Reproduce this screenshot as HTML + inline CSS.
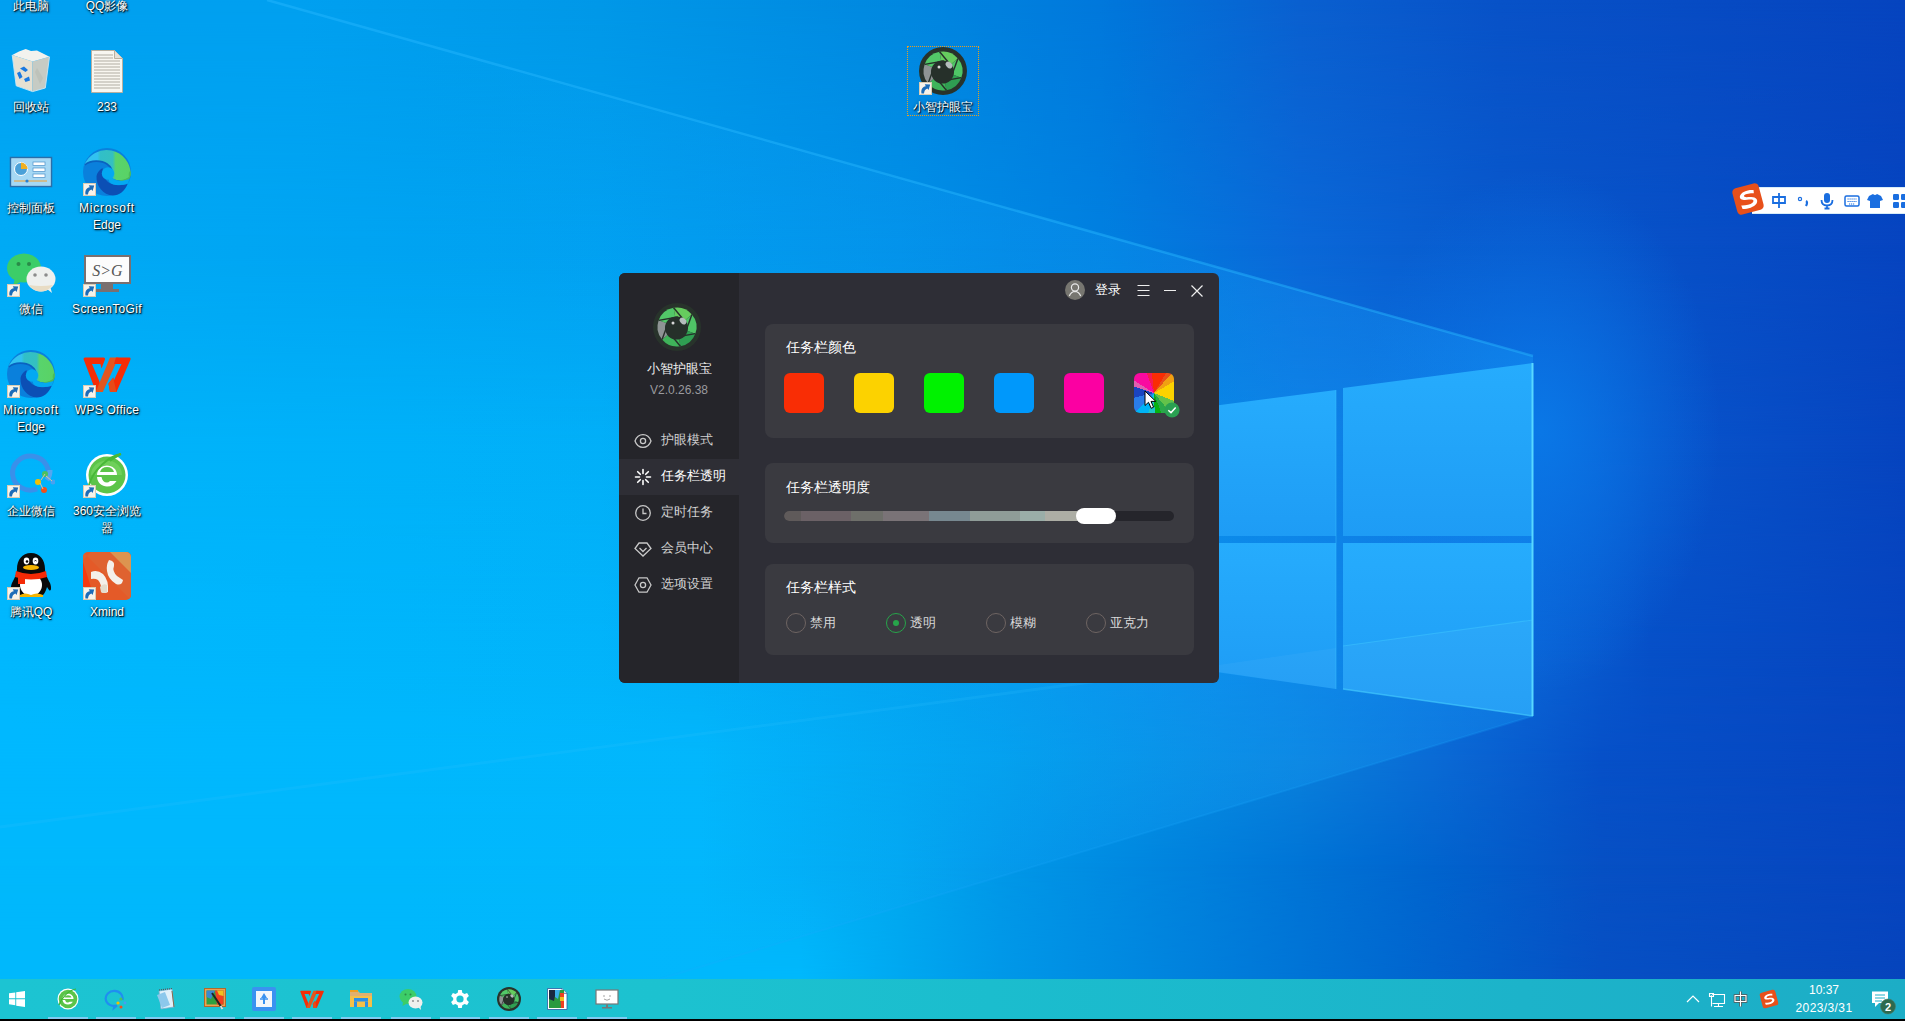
<!DOCTYPE html>
<html><head><meta charset="utf-8">
<style>
*{margin:0;padding:0;box-sizing:border-box}
html,body{width:1905px;height:1021px;overflow:hidden;background:#0a3fc0}
body{position:relative;font-family:"Liberation Sans",sans-serif}
#bg{position:absolute;left:0;top:0}
.abs{position:absolute}
.nav{left:42px;font-size:13px;line-height:18px;color:#d2d2d2;white-space:nowrap}
.card{left:146px;width:429px;border-radius:8px;background:#3a3a40}
.ctitle{left:167px;font-size:14px;line-height:18px;color:#fff;white-space:nowrap}
.sw{top:100px;width:40px;height:40px;border-radius:6px}
.radio{top:340px;width:20px;height:20px;border-radius:50%;border:1px solid #6e6462}
.rlab{top:341px;font-size:13px;line-height:18px;color:#d8d8d8;white-space:nowrap}
.dlab{font-size:12px;line-height:17px;color:#fff;text-align:center;text-shadow:1px 1px 0 rgba(0,0,0,.55),1px 1px 2px rgba(0,0,0,.9),0 0 3px rgba(0,0,0,.5)}
</style></head><body>
<svg id="bg" width="1905" height="1021" viewBox="0 0 1905 1021">
<defs>
<linearGradient id="r0" x1="0" y1="0" x2="1905" y2="0" gradientUnits="userSpaceOnUse"><stop offset="0.0000" stop-color="#00a0f0"/><stop offset="0.1575" stop-color="#00a0f0"/><stop offset="0.3150" stop-color="#0098e8"/><stop offset="0.4724" stop-color="#0088e0"/><stop offset="0.5774" stop-color="#0078dc"/><stop offset="0.6824" stop-color="#0a60d0"/><stop offset="0.7874" stop-color="#0852c8"/><stop offset="1.0000" stop-color="#0644bf"/></linearGradient>
<linearGradient id="r1" x1="0" y1="0" x2="1905" y2="0" gradientUnits="userSpaceOnUse"><stop offset="0.0000" stop-color="#00aaf5"/><stop offset="0.3150" stop-color="#00a0f0"/><stop offset="0.4724" stop-color="#0090e8"/><stop offset="0.5774" stop-color="#0080e0"/><stop offset="0.6824" stop-color="#0a68d8"/><stop offset="0.7874" stop-color="#0858cc"/><stop offset="1.0000" stop-color="#0644c0"/></linearGradient>
<linearGradient id="m1g" x1="0" y1="0" x2="0" y2="245" gradientUnits="userSpaceOnUse"><stop offset="0" stop-color="#fff" stop-opacity="0"/><stop offset="1" stop-color="#fff" stop-opacity="1"/></linearGradient>
<mask id="m1" maskUnits="userSpaceOnUse" x="0" y="0" width="1905" height="1021"><rect x="0" y="0" width="1905" height="1021" fill="url(#m1g)"/></mask>
<linearGradient id="r2" x1="0" y1="0" x2="1905" y2="0" gradientUnits="userSpaceOnUse"><stop offset="0.0000" stop-color="#00b4fb"/><stop offset="0.3150" stop-color="#00b0f8"/><stop offset="0.4724" stop-color="#0098e8"/><stop offset="0.5774" stop-color="#0088e2"/><stop offset="0.6824" stop-color="#0a78e0"/><stop offset="0.8047" stop-color="#0a62d8"/><stop offset="0.8661" stop-color="#0855cc"/><stop offset="1.0000" stop-color="#0644bf"/></linearGradient>
<linearGradient id="m2g" x1="0" y1="245" x2="0" y2="450" gradientUnits="userSpaceOnUse"><stop offset="0" stop-color="#fff" stop-opacity="0"/><stop offset="1" stop-color="#fff" stop-opacity="1"/></linearGradient>
<mask id="m2" maskUnits="userSpaceOnUse" x="0" y="0" width="1905" height="1021"><rect x="0" y="245" width="1905" height="776" fill="url(#m2g)"/></mask>
<linearGradient id="r3" x1="0" y1="0" x2="1905" y2="0" gradientUnits="userSpaceOnUse"><stop offset="0.0000" stop-color="#00b8fe"/><stop offset="0.3150" stop-color="#00b4fa"/><stop offset="0.4724" stop-color="#00a4f0"/><stop offset="0.6399" stop-color="#0a88e8"/><stop offset="0.8047" stop-color="#0a64d6"/><stop offset="0.8661" stop-color="#0650c8"/><stop offset="1.0000" stop-color="#0644bf"/></linearGradient>
<linearGradient id="m3g" x1="0" y1="450" x2="0" y2="650" gradientUnits="userSpaceOnUse"><stop offset="0" stop-color="#fff" stop-opacity="0"/><stop offset="1" stop-color="#fff" stop-opacity="1"/></linearGradient>
<mask id="m3" maskUnits="userSpaceOnUse" x="0" y="0" width="1905" height="1021"><rect x="0" y="450" width="1905" height="571" fill="url(#m3g)"/></mask>
<linearGradient id="r4" x1="0" y1="0" x2="1905" y2="0" gradientUnits="userSpaceOnUse"><stop offset="0.0000" stop-color="#00b8ff"/><stop offset="0.3675" stop-color="#00b8fc"/><stop offset="0.5249" stop-color="#00a0ec"/><stop offset="0.6824" stop-color="#0a80dc"/><stop offset="0.7612" stop-color="#0a68d4"/><stop offset="0.8399" stop-color="#0650c8"/><stop offset="1.0000" stop-color="#0644bf"/></linearGradient>
<linearGradient id="m4g" x1="0" y1="650" x2="0" y2="760" gradientUnits="userSpaceOnUse"><stop offset="0" stop-color="#fff" stop-opacity="0"/><stop offset="1" stop-color="#fff" stop-opacity="1"/></linearGradient>
<mask id="m4" maskUnits="userSpaceOnUse" x="0" y="0" width="1905" height="1021"><rect x="0" y="650" width="1905" height="371" fill="url(#m4g)"/></mask>
<linearGradient id="r5" x1="0" y1="0" x2="1905" y2="0" gradientUnits="userSpaceOnUse"><stop offset="0.0000" stop-color="#00b8fc"/><stop offset="0.3675" stop-color="#00b8fc"/><stop offset="0.4724" stop-color="#00a8f0"/><stop offset="0.5249" stop-color="#0098e8"/><stop offset="0.6299" stop-color="#0080dc"/><stop offset="0.7349" stop-color="#0068d0"/><stop offset="0.8399" stop-color="#0650c4"/><stop offset="1.0000" stop-color="#0644bf"/></linearGradient>
<linearGradient id="m5g" x1="0" y1="760" x2="0" y2="865" gradientUnits="userSpaceOnUse"><stop offset="0" stop-color="#fff" stop-opacity="0"/><stop offset="1" stop-color="#fff" stop-opacity="1"/></linearGradient>
<mask id="m5" maskUnits="userSpaceOnUse" x="0" y="0" width="1905" height="1021"><rect x="0" y="760" width="1905" height="261" fill="url(#m5g)"/></mask>
<linearGradient id="r6" x1="0" y1="0" x2="1905" y2="0" gradientUnits="userSpaceOnUse"><stop offset="0.0000" stop-color="#00b8fc"/><stop offset="0.4199" stop-color="#00b8fc"/><stop offset="0.4724" stop-color="#00a8f0"/><stop offset="0.5249" stop-color="#0098e8"/><stop offset="0.6299" stop-color="#0080dc"/><stop offset="0.7349" stop-color="#0068d0"/><stop offset="0.8399" stop-color="#0650c4"/><stop offset="1.0000" stop-color="#0644bc"/></linearGradient>
<linearGradient id="m6g" x1="0" y1="865" x2="0" y2="979" gradientUnits="userSpaceOnUse"><stop offset="0" stop-color="#fff" stop-opacity="0"/><stop offset="1" stop-color="#fff" stop-opacity="1"/></linearGradient>
<mask id="m6" maskUnits="userSpaceOnUse" x="0" y="0" width="1905" height="1021"><rect x="0" y="865" width="1905" height="156" fill="url(#m6g)"/></mask>
<linearGradient id="beamg" x1="400" y1="0" x2="1533" y2="0" gradientUnits="userSpaceOnUse">
<stop offset="0" stop-color="#1aa8ff" stop-opacity="0"/><stop offset="1" stop-color="#1aa8ff" stop-opacity="0.3"/>
</linearGradient>
<radialGradient id="glow" cx="0" cy="0" r="1" gradientUnits="userSpaceOnUse" gradientTransform="translate(1540 430) scale(180 260)">
<stop offset="0" stop-color="#0a7ae8" stop-opacity="0.9"/><stop offset="1" stop-color="#0a78e8" stop-opacity="0"/>
</radialGradient>
<linearGradient id="pane" x1="0" y1="0" x2="0" y2="1">
<stop offset="0" stop-color="#26acfd"/><stop offset="1" stop-color="#1e9cf5"/>
</linearGradient>
</defs>
<rect width="1905" height="1021" fill="url(#r0)"/>
<rect x="0" y="0" width="1905" height="1021" fill="url(#r1)" mask="url(#m1)"/>
<rect x="0" y="245" width="1905" height="776" fill="url(#r2)" mask="url(#m2)"/>
<rect x="0" y="450" width="1905" height="571" fill="url(#r3)" mask="url(#m3)"/>
<rect x="0" y="650" width="1905" height="371" fill="url(#r4)" mask="url(#m4)"/>
<rect x="0" y="760" width="1905" height="261" fill="url(#r5)" mask="url(#m5)"/>
<rect x="0" y="865" width="1905" height="156" fill="url(#r6)" mask="url(#m6)"/>
<rect x="1300" y="150" width="500" height="600" fill="url(#glow)"/>
<polygon points="0,0 267,0 1533,356 1533,716 660,979 0,979" fill="url(#beamg)"/>
<line x1="267" y1="0" x2="1533" y2="356" stroke="#28b8ff" stroke-opacity="0.45" stroke-width="2.5"/>
<line x1="1533" y1="716" x2="660" y2="979" stroke="#20a8ff" stroke-opacity="0.2" stroke-width="2"/>
<line x1="0" y1="827" x2="1219" y2="665" stroke="#30c4ff" stroke-opacity="0.18" stroke-width="3"/>
<polygon points="1090,422 1336,390 1336,536 1090,536" fill="url(#pane)"/>
<polygon points="1343,388 1533,363 1533,536 1343,536" fill="url(#pane)"/>
<polygon points="1090,543 1336,543 1336,689 1090,654" fill="url(#pane)"/>
<polygon points="1343,543 1533,543 1533,716 1343,689" fill="url(#pane)"/>
<polygon points="1219,665 1336,648 1336,689 1219,672" fill="#ffffff" fill-opacity="0.04"/>
<polygon points="1343,646 1533,620 1533,716 1343,689" fill="#ffffff" fill-opacity="0.04"/>
<line x1="1343" y1="646" x2="1533" y2="620" stroke="#40c8ff" stroke-opacity="0.5" stroke-width="1.2"/>
<line x1="1336" y1="390" x2="1336" y2="689" stroke="#38c0ff" stroke-opacity="0.5" stroke-width="1"/>
<line x1="1343" y1="689" x2="1533" y2="716" stroke="#48d0ff" stroke-opacity="0.6" stroke-width="1.5"/>
<line x1="1532.5" y1="363" x2="1532.5" y2="716" stroke="#58d8ff" stroke-width="2"/>
</svg>

<svg width="0" height="0" style="position:absolute"><defs><symbol id="xzlogo" viewBox="0 0 48 48"><circle cx="24" cy="24" r="24" fill="#28332b"/><path d="M24 24 L20.61 4.80 A19.5 19.5 0 0 1 38.94 11.47Z" fill="#66cc5e"/><path d="M24 24 L38.94 11.47 A19.5 19.5 0 0 1 42.32 30.67Z" fill="#4fc566"/><path d="M24 24 L42.32 30.67 A19.5 19.5 0 0 1 27.39 43.20Z" fill="#2f9f52"/><path d="M24 24 L27.39 43.20 A19.5 19.5 0 0 1 9.06 36.53Z" fill="#3fb45a"/><path d="M24 24 L9.06 36.53 A19.5 19.5 0 0 1 5.68 17.33Z" fill="#8e9494"/><path d="M24 24 L5.68 17.33 A19.5 19.5 0 0 1 20.61 4.80Z" fill="#52c868"/><path d="M20.61 4.80 L33.06 19.77" stroke="#26302a" stroke-width="1.4"/><path d="M38.94 11.47 L32.19 29.74" stroke="#26302a" stroke-width="1.4"/><path d="M42.32 30.67 L23.13 33.96" stroke="#26302a" stroke-width="1.4"/><path d="M27.39 43.20 L14.94 28.23" stroke="#26302a" stroke-width="1.4"/><path d="M9.06 36.53 L15.81 18.26" stroke="#26302a" stroke-width="1.4"/><path d="M5.68 17.33 L24.87 14.04" stroke="#26302a" stroke-width="1.4"/><circle cx="23.5" cy="25" r="11.5" fill="#26302a"/><ellipse cx="30" cy="18" rx="3.8" ry="2.8" fill="#b4bcbc" transform="rotate(45 30 18)"/><circle cx="20" cy="20" r="1.5" fill="#d8d8d8"/></symbol></defs></svg>
<!-- desktop icons -->
<div class="abs dlab" style="left:-7px;top:-2px;width:76px">此电脑</div>
<div class="abs dlab" style="left:69px;top:-2px;width:76px">QQ影像</div>
<svg class="abs" style="left:7px;top:48px" width="48" height="48" viewBox="0 0 48 48">
<path d="M5.2 7 L25.6 13.5 L25.6 43.6 L9.2 37.8Z" fill="#e6e0d2"/>
<path d="M25.6 13.5 L42.5 8.7 L38.3 40 L25.6 43.6Z" fill="#c6cbc4"/>
<path d="M5.2 7 L9.2 37.8 L25.6 43.6 L38.3 40 L42.5 8.7" fill="none" stroke="#c8e6f6" stroke-width="0.9"/>
<path d="M5.2 7 L12 3.5 L18.7 1 L24 3 L30 2.5 L35 5 L42.5 8.7 L25.6 13.5Z" fill="#f2f2ee"/>
<path d="M30 20 L36 30 L33 36 L28 24Z" fill="#b8bcb4" opacity="0.6"/>
<path d="M13 20.5 L17 18.5 L21 22 L18.5 24Z M10 25 L13 23.5 L15.5 29 L12.5 31Z M17 31 L22 28.5 L23 32.5 L18.5 34Z" fill="#1a78e0"/>
</svg>
<div class="abs dlab" style="left:-7px;top:99px;width:76px">回收站</div>
<svg class="abs" style="left:83px;top:48px" width="48" height="48" viewBox="0 0 48 48">
<path d="M8.5 2.5 H31.5 L39.5 10.5 V44.5 H8.5Z" fill="#f8f6f0" stroke="#b8b0a0"/>
<path d="M31.5 2.5 V10.5 H39.5" fill="#e4e0d8" stroke="#b8b0a0"/>
<path d="M11 7H30M11 10H30M11 13H37M11 16H37M11 19H37M11 22H37M11 25H37M11 28H37M11 31H37M11 34H37M11 37H37M11 40H37" stroke="#a8a498" stroke-width="0.9"/>
</svg>
<div class="abs dlab" style="left:69px;top:99px;width:76px">233</div>
<svg class="abs" style="left:7px;top:148px" width="48" height="48" viewBox="0 0 48 48">
<rect x="3.5" y="9.5" width="41" height="29" fill="#b8e2f8" stroke="#2a6ea8" stroke-width="1.5"/>
<rect x="5" y="11" width="38" height="26" fill="#a6d8f4"/>
<circle cx="14" cy="21" r="6.5" fill="#4aa0d8" stroke="#fff" stroke-width="1"/>
<path d="M14 21 V14.5 A6.5 6.5 0 0 1 20.5 21Z" fill="#f0b020"/>
<rect x="26" y="14" width="12" height="3.5" fill="#fff" stroke="#4a90c8" stroke-width="0.7"/>
<rect x="26" y="20" width="12" height="3.5" fill="#fff" stroke="#4a90c8" stroke-width="0.7"/>
<rect x="26" y="26" width="12" height="3.5" fill="#fff" stroke="#4a90c8" stroke-width="0.7"/>
<path d="M7 33 H40" stroke="#f0a030" stroke-width="1"/><circle cx="20" cy="33" r="1.6" fill="#2a80d0"/>
</svg>
<div class="abs dlab" style="left:-7px;top:200px;width:76px">控制面板</div>
<svg class="abs" style="left:83px;top:148px" width="48" height="48" viewBox="0 0 48 48">
<defs><linearGradient id="eg1" x1="0" y1="0" x2="48" y2="0" gradientUnits="userSpaceOnUse"><stop offset="0.3" stop-color="#32c2f0"/><stop offset="0.36" stop-color="#31bfc8"/><stop offset="0.62" stop-color="#34c0c0"/><stop offset="0.68" stop-color="#58d46c"/><stop offset="1" stop-color="#5ad264"/></linearGradient></defs>
<circle cx="24" cy="24" r="24" fill="#0a80dc"/>
<path d="M1.2 17.5 A24 24 0 0 1 47.6 27 C46 31 40 33 35 32 C31 31.5 28 30 28.5 27 C29.5 23 28 19 24 16 C19 12.5 8 11.5 1.2 17.5 Z" fill="url(#eg1)"/>
<path d="M29 32 C33 32.5 40 33 46 29 C45 25 47 22 47.8 24 C47.8 28 47 30 46 31.5 C42 33.5 38 34 35 32Z" fill="#4cbc58"/>
<path d="M1.8 17 C8 11.5 19 12.5 24 16 C27.5 18.5 29.5 22 29 26" fill="none" stroke="#0a62c0" stroke-width="1.6"/>
<path d="M13.5 28 C13 38 20 47 30 47.5 C36 47.5 42 43 44.5 36 C40 37.5 34 37.5 30.5 36.5 C24 35 20 30 19.5 20 C16 22 14 25 13.5 28 Z" fill="#0c4fb5"/>
<path d="M29.5 30 C32 33 38 34 46.5 31 L45 35.5 C40 37.2 34 37.4 30.5 36.5 C27 35.5 25 33 26 30Z" fill="#03a9f2"/>
<circle cx="25" cy="25.5" r="6.2" fill="#03a9f2"/>
</svg>
<svg class="abs" style="left:83px;top:183px" width="13" height="13" viewBox="0 0 13 13"><rect x="0.5" y="0.5" width="12" height="12" fill="#f7f3ea" stroke="#d9ccb4"/><path d="M2.5 11.5 C1.8 7.5 3.5 5 6.8 4.3 L5.8 2.3 L11.2 2.6 L9.6 8 L8.4 6.4 C6.3 7 5.2 8.8 5 11.5Z" fill="#1c6cb8"/></svg>
<div class="abs dlab" style="left:69px;top:200px;width:76px"><span style="letter-spacing:0.8px">Microsoft</span><br>Edge</div>
<svg class="abs" style="left:7px;top:249px" width="52" height="48" viewBox="0 0 52 48">
<ellipse cx="17" cy="19" rx="17" ry="14.5" fill="#3ccd68"/>
<path d="M8 29 L6 37 L15 32Z" fill="#3ccd68"/>
<circle cx="11.5" cy="15" r="2" fill="#2a8a48"/><circle cx="22" cy="15" r="2" fill="#2a8a48"/>
<ellipse cx="34" cy="30" rx="14.5" ry="12.5" fill="#eef0ee"/>
<path d="M40 40 L45 44 L43 37Z" fill="#eef0ee"/>
<path d="M22 36 Q34 38 46 36 Q40 43 34 42.5 Q27 43 22 36Z" fill="#e8dcc4"/>
<circle cx="28" cy="26" r="1.8" fill="#8c8c8c"/><circle cx="39" cy="26" r="1.8" fill="#8c8c8c"/>
</svg>
<svg class="abs" style="left:7px;top:284px" width="13" height="13" viewBox="0 0 13 13"><rect x="0.5" y="0.5" width="12" height="12" fill="#f7f3ea" stroke="#d9ccb4"/><path d="M2.5 11.5 C1.8 7.5 3.5 5 6.8 4.3 L5.8 2.3 L11.2 2.6 L9.6 8 L8.4 6.4 C6.3 7 5.2 8.8 5 11.5Z" fill="#1c6cb8"/></svg>
<div class="abs dlab" style="left:-7px;top:301px;width:76px">微信</div>
<svg class="abs" style="left:83px;top:249px" width="48" height="48" viewBox="0 0 48 48">
<rect x="1" y="6" width="47" height="29" fill="#7a7070"/>
<rect x="3" y="8" width="43" height="25" fill="#fcfcfc"/>
<text x="24.5" y="27" font-family="Liberation Serif,serif" font-style="italic" font-size="16" fill="#555" text-anchor="middle">S&gt;G</text>
<rect x="18" y="35" width="12" height="6" fill="#7a7070"/>
<rect x="12" y="40" width="24" height="3" fill="#7a7070"/>
</svg>
<svg class="abs" style="left:83px;top:284px" width="13" height="13" viewBox="0 0 13 13"><rect x="0.5" y="0.5" width="12" height="12" fill="#f7f3ea" stroke="#d9ccb4"/><path d="M2.5 11.5 C1.8 7.5 3.5 5 6.8 4.3 L5.8 2.3 L11.2 2.6 L9.6 8 L8.4 6.4 C6.3 7 5.2 8.8 5 11.5Z" fill="#1c6cb8"/></svg>
<div class="abs dlab" style="left:69px;top:301px;width:76px"><span style="letter-spacing:0.35px">ScreenToGif</span></div>
<svg class="abs" style="left:7px;top:350px" width="48" height="48" viewBox="0 0 48 48">
<defs><linearGradient id="eg2" x1="0" y1="0" x2="48" y2="0" gradientUnits="userSpaceOnUse"><stop offset="0.3" stop-color="#32c2f0"/><stop offset="0.36" stop-color="#31bfc8"/><stop offset="0.62" stop-color="#34c0c0"/><stop offset="0.68" stop-color="#58d46c"/><stop offset="1" stop-color="#5ad264"/></linearGradient></defs>
<circle cx="24" cy="24" r="24" fill="#0a80dc"/>
<path d="M1.2 17.5 A24 24 0 0 1 47.6 27 C46 31 40 33 35 32 C31 31.5 28 30 28.5 27 C29.5 23 28 19 24 16 C19 12.5 8 11.5 1.2 17.5 Z" fill="url(#eg2)"/>
<path d="M29 32 C33 32.5 40 33 46 29 C45 25 47 22 47.8 24 C47.8 28 47 30 46 31.5 C42 33.5 38 34 35 32Z" fill="#4cbc58"/>
<path d="M1.8 17 C8 11.5 19 12.5 24 16 C27.5 18.5 29.5 22 29 26" fill="none" stroke="#0a62c0" stroke-width="1.6"/>
<path d="M13.5 28 C13 38 20 47 30 47.5 C36 47.5 42 43 44.5 36 C40 37.5 34 37.5 30.5 36.5 C24 35 20 30 19.5 20 C16 22 14 25 13.5 28 Z" fill="#0c4fb5"/>
<path d="M29.5 30 C32 33 38 34 46.5 31 L45 35.5 C40 37.2 34 37.4 30.5 36.5 C27 35.5 25 33 26 30Z" fill="#03a9f2"/>
<circle cx="25" cy="25.5" r="6.2" fill="#03a9f2"/>
</svg>
<svg class="abs" style="left:7px;top:385px" width="13" height="13" viewBox="0 0 13 13"><rect x="0.5" y="0.5" width="12" height="12" fill="#f7f3ea" stroke="#d9ccb4"/><path d="M2.5 11.5 C1.8 7.5 3.5 5 6.8 4.3 L5.8 2.3 L11.2 2.6 L9.6 8 L8.4 6.4 C6.3 7 5.2 8.8 5 11.5Z" fill="#1c6cb8"/></svg>
<div class="abs dlab" style="left:-7px;top:402px;width:76px"><span style="letter-spacing:0.8px">Microsoft</span><br>Edge</div>
<svg class="abs" style="left:83px;top:350px" width="48" height="48" viewBox="0 0 48 48">
<path d="M0.5 9 Q0.5 7.5 2 7.5 L20.5 7.5 Q22.5 7.5 22 9.5 L18.5 18.5 L17.4 14 L9 14 L16 30.5 L19.8 42 L13 42 Z" fill="#f52d06"/>
<path d="M27 7.5 L35.5 7.5 L19.8 42 L13 42 L13.5 40 Z" fill="#e2561e"/>
<path d="M33 7.5 L46.5 7.5 Q48 7.5 47.5 9.5 L33.5 42 L27 42 L25.5 33.5 L30.3 27.5 L30.8 30.5 L38.5 14 L31 14 Z" fill="#f52d06"/>
<path d="M25.5 33.5 L30.3 27.5 L30.8 30.5 L33.5 42 L27 42 Z" fill="#e84a18"/>
</svg>
<svg class="abs" style="left:83px;top:385px" width="13" height="13" viewBox="0 0 13 13"><rect x="0.5" y="0.5" width="12" height="12" fill="#f7f3ea" stroke="#d9ccb4"/><path d="M2.5 11.5 C1.8 7.5 3.5 5 6.8 4.3 L5.8 2.3 L11.2 2.6 L9.6 8 L8.4 6.4 C6.3 7 5.2 8.8 5 11.5Z" fill="#1c6cb8"/></svg>
<div class="abs dlab" style="left:69px;top:402px;width:76px"><span style="letter-spacing:0.25px">WPS Office</span></div>
<svg class="abs" style="left:7px;top:450px" width="48" height="48" viewBox="0 0 48 48">
<path d="M40 30 A18 17 0 1 0 30 39" fill="none" stroke="#3a90ea" stroke-width="5"/>
<path d="M40 30 A18 17 0 0 0 43 20" fill="none" stroke="#54a6f0" stroke-width="5"/>
<circle cx="38" cy="24" r="3" fill="#4cc060"/><circle cx="31" cy="32" r="3" fill="#f5c000"/>
<circle cx="37" cy="40" r="3" fill="#f0501a"/><circle cx="46" cy="32" r="2.5" fill="#48a0f0"/>
<path d="M38 24 L34 30 M33 33 L36 39 M39 26 L45 31" stroke="#e0c0a0" stroke-width="1"/>
</svg>
<svg class="abs" style="left:7px;top:485px" width="13" height="13" viewBox="0 0 13 13"><rect x="0.5" y="0.5" width="12" height="12" fill="#f7f3ea" stroke="#d9ccb4"/><path d="M2.5 11.5 C1.8 7.5 3.5 5 6.8 4.3 L5.8 2.3 L11.2 2.6 L9.6 8 L8.4 6.4 C6.3 7 5.2 8.8 5 11.5Z" fill="#1c6cb8"/></svg>
<div class="abs dlab" style="left:-7px;top:503px;width:76px">企业微信</div>
<svg class="abs" style="left:83px;top:450px" width="48" height="48" viewBox="0 0 48 48">
<circle cx="24" cy="25" r="21" fill="#ffffff"/>
<circle cx="24" cy="25" r="18.5" fill="#5cc449"/>
<path d="M8 25 H39 C39 16 32 10.5 24 10.5 C15 10.5 8 17 8 25Z M15.5 22 C16.5 17.5 20 15 24 15 C28 15 31.5 17.5 32.5 22Z" fill="#6fd05a" fill-rule="evenodd"/>
<path d="M14 25 H34 C34 19.5 29.5 15.5 24 15.5 C18.5 15.5 14 19.5 14 25Z" fill="#fff"/>
<path d="M17 22 H31 C30 18.5 27.5 17 24 17 C20.5 17 18 18.5 17 22Z" fill="#5cc449"/>
<path d="M14 27 C14.5 33 19 36.5 24 36.5 C28.5 36.5 31.5 34.5 33.5 31 L27 31 C26 32 25 32.5 24 32.5 C21 32.5 19 30.5 18.5 27Z" fill="#fff"/>
<path d="M6 35 C10 20 26 6 38 4 C34 6 30 8 27 11" fill="none" stroke="#48b838" stroke-width="2"/>
</svg>
<svg class="abs" style="left:83px;top:485px" width="13" height="13" viewBox="0 0 13 13"><rect x="0.5" y="0.5" width="12" height="12" fill="#f7f3ea" stroke="#d9ccb4"/><path d="M2.5 11.5 C1.8 7.5 3.5 5 6.8 4.3 L5.8 2.3 L11.2 2.6 L9.6 8 L8.4 6.4 C6.3 7 5.2 8.8 5 11.5Z" fill="#1c6cb8"/></svg>
<div class="abs dlab" style="left:69px;top:503px;width:76px">360安全浏览<br>器</div>
<svg class="abs" style="left:7px;top:552px" width="48" height="48" viewBox="0 0 48 48">
<path d="M24 1 C33 1 38 8 38 17 C38 22 40 25 43 31 C45 36 44 40 42 38 L40 35 C39 39 37 42 36 43 H12 C11 42 9 39 8 35 L6 38 C4 40 3 36 5 31 C8 25 10 22 10 17 C10 8 15 1 24 1Z" fill="#0a0a0a"/>
<ellipse cx="24" cy="33" rx="11" ry="11" fill="#ffffff"/>
<path d="M9 19 Q24 25 39 19 L40 25 Q24 30 8 25Z" fill="#f52a06"/>
<rect x="11" y="24" width="7" height="8" fill="#f52a06"/>
<ellipse cx="24" cy="15.5" rx="8" ry="2.6" fill="#f5b400"/>
<ellipse cx="19.5" cy="9" rx="2.8" ry="3.4" fill="#fff"/><ellipse cx="28.5" cy="9" rx="2.8" ry="3.4" fill="#fff"/>
<circle cx="20" cy="9.5" r="1.3" fill="#000"/><path d="M27.5 9 Q28.5 8 29.5 9" stroke="#000" stroke-width="1" fill="none"/>
<path d="M13 43 Q18 40 24 43 Q30 40 36 43 L36 45 H12Z" fill="#f5b400"/>
</svg>
<svg class="abs" style="left:7px;top:587px" width="13" height="13" viewBox="0 0 13 13"><rect x="0.5" y="0.5" width="12" height="12" fill="#f7f3ea" stroke="#d9ccb4"/><path d="M2.5 11.5 C1.8 7.5 3.5 5 6.8 4.3 L5.8 2.3 L11.2 2.6 L9.6 8 L8.4 6.4 C6.3 7 5.2 8.8 5 11.5Z" fill="#1c6cb8"/></svg>
<div class="abs dlab" style="left:-7px;top:604px;width:76px">腾讯QQ</div>
<svg class="abs" style="left:83px;top:552px" width="48" height="48" viewBox="0 0 48 48">
<defs><clipPath id="xc"><rect x="0" y="0" width="48" height="48" rx="5"/></clipPath></defs>
<g clip-path="url(#xc)">
<rect width="48" height="48" fill="#e45a28"/>
<path d="M0 8 L8 0 H48 V48 L0 0Z" fill="#df6230"/>
<path d="M27 0 H48 V21Z" fill="#dc9450"/>
<path d="M0 10 V48 H12Z" fill="#f53a10"/>
<path d="M26 8 Q32 9 31 14 Q29 19 34 24 L40 28 Q39 34 33 32 Q25 27 24 19 Q23 13 26 8Z" fill="#f4f0ea"/>
<path d="M8 20 Q14 17 20 22 Q26 28 25 40 Q22 42 18 40 Q19 32 15 28 Q12 26 8 27Z" fill="#f4f0ea"/>
<path d="M17 35 Q20 31 24 33 L24 40 Q20 42 18 40Z" fill="#e4dccc"/>
</g></svg>
<svg class="abs" style="left:83px;top:587px" width="13" height="13" viewBox="0 0 13 13"><rect x="0.5" y="0.5" width="12" height="12" fill="#f7f3ea" stroke="#d9ccb4"/><path d="M2.5 11.5 C1.8 7.5 3.5 5 6.8 4.3 L5.8 2.3 L11.2 2.6 L9.6 8 L8.4 6.4 C6.3 7 5.2 8.8 5 11.5Z" fill="#1c6cb8"/></svg>
<div class="abs dlab" style="left:69px;top:604px;width:76px">Xmind</div>
<div class="abs" style="left:907px;top:46px;width:72px;height:70px;border:1px dotted #e8a020"></div>
<svg class="abs" style="left:919px;top:47px" width="48" height="48" viewBox="0 0 48 48" id="xzlogo2">
<use href="#xzlogo" xlink:href="#xzlogo"/></svg>
<svg class="abs" style="left:919px;top:82px" width="13" height="13" viewBox="0 0 13 13"><rect x="0.5" y="0.5" width="12" height="12" fill="#f7f3ea" stroke="#d9ccb4"/><path d="M2.5 11.5 C1.8 7.5 3.5 5 6.8 4.3 L5.8 2.3 L11.2 2.6 L9.6 8 L8.4 6.4 C6.3 7 5.2 8.8 5 11.5Z" fill="#1c6cb8"/></svg>
<div class="abs dlab" style="left:905px;top:99px;width:76px">小智护眼宝</div>
<!-- taskbar -->
<div class="abs" style="left:0;top:979px;width:1905px;height:40px;background:linear-gradient(90deg,#1cc4d2 0%,#1cc2d0 35%,#1bbdce 52%,#1cb3ca 80%,#1cadc6 100%)"></div>
<div class="abs" style="left:0;top:1019px;width:1905px;height:2px;background:#000"></div>
<svg class="abs" style="left:9px;top:991px" width="16" height="16" viewBox="0 0 16 16" fill="#fff">
<path d="M0 2.3 L6.3 1.4 V7.3 H0Z M7.2 1.2 L16 0 V7.3 H7.2Z M0 8.2 H6.3 V14.2 L0 13.3Z M7.2 8.2 H16 V16 L7.2 14.8Z"/></svg>
<div class="abs" style="left:48px;top:1017px;width:40px;height:2px;background:#7fcbf2"></div>
<div class="abs" style="left:96px;top:1017px;width:40px;height:2px;background:#7fcbf2"></div>
<div class="abs" style="left:145px;top:1017px;width:40px;height:2px;background:#7fcbf2"></div>
<div class="abs" style="left:195px;top:1017px;width:40px;height:2px;background:#7fcbf2"></div>
<div class="abs" style="left:244px;top:1017px;width:40px;height:2px;background:#7fcbf2"></div>
<div class="abs" style="left:292px;top:1017px;width:40px;height:2px;background:#7fcbf2"></div>
<div class="abs" style="left:341px;top:1017px;width:40px;height:2px;background:#7fcbf2"></div>
<div class="abs" style="left:391px;top:1017px;width:40px;height:2px;background:#7fcbf2"></div>
<div class="abs" style="left:440px;top:1017px;width:40px;height:2px;background:#7fcbf2"></div>
<div class="abs" style="left:489px;top:1017px;width:40px;height:2px;background:#7fcbf2"></div>
<div class="abs" style="left:537px;top:1017px;width:40px;height:2px;background:#7fcbf2"></div>
<div class="abs" style="left:587px;top:1017px;width:40px;height:2px;background:#7fcbf2"></div>
<svg class="abs" style="left:56px;top:987px" width="24" height="24" viewBox="0 0 24 24"><circle cx="12" cy="12" r="10.5" fill="#fff"/><circle cx="12" cy="12" r="9.3" fill="#5cc449"/>
<path d="M6.5 12 H17.5 C17.5 8.8 15 6.8 12 6.8 C9 6.8 6.5 8.8 6.5 12Z" fill="#fff"/><path d="M8.5 10.5 H15.5 C15 9 13.8 8.3 12 8.3 C10.2 8.3 9 9 8.5 10.5Z" fill="#5cc449"/>
<path d="M6.6 13 C7 16 9.2 17.6 12 17.6 C14.3 17.6 15.8 16.6 16.8 14.8 H13.6 C13.1 15.3 12.6 15.6 12 15.6 C10.5 15.6 9.4 14.6 9.1 13Z" fill="#fff"/>
<path d="M3 18 C6 10 13 3 20 2" fill="none" stroke="#3cb830" stroke-width="1.2"/></svg>
<svg class="abs" style="left:104px;top:987px" width="24" height="24" viewBox="0 0 24 24"><path d="M18.5 13 A8.5 7.5 0 1 0 13 18.5 L10 21 L10.5 18.5" fill="none" stroke="#1f8ef0" stroke-width="2.2"/>
<circle cx="17" cy="12" r="1.6" fill="#4cc060"/><circle cx="14" cy="16" r="1.6" fill="#f5c000"/><circle cx="17" cy="20" r="1.5" fill="#f0501a"/><circle cx="21" cy="16" r="1.4" fill="#48a0f0"/></svg>
<svg class="abs" style="left:153px;top:987px" width="24" height="24" viewBox="0 0 24 24"><path d="M6 4 L19 2 L21 20 L8 22Z" fill="#dff0fa" stroke="#7ab0d0" stroke-width="0.8"/>
<path d="M4 8 L12 5 L17 18 L9 21Z" fill="#8cc8ec"/><path d="M6 3 L19 1.5" stroke="#555" stroke-width="1.2" stroke-dasharray="1 1"/>
<path d="M19 4 L21 20" stroke="#8a6a4a" stroke-width="1"/></svg>
<svg class="abs" style="left:203px;top:987px" width="24" height="24" viewBox="0 0 24 24"><rect x="1.5" y="1.5" width="21" height="18" fill="#f0a050" stroke="#b06a2a"/><rect x="3.5" y="3.5" width="17" height="14" fill="#30a040"/>
<path d="M3.5 3.5 H12 L8 12 L3.5 10Z" fill="#3a8ad0"/><path d="M12 3.5 H20.5 V17.5 H14 Z" fill="#f04020"/><path d="M14 3.5 L20.5 3.5 L20.5 9 L16 8Z" fill="#f0c020"/>
<path d="M9 6 L19 21" stroke="#222" stroke-width="2"/><path d="M17.5 19 L19.5 22" stroke="#ddd" stroke-width="2"/></svg>
<svg class="abs" style="left:252px;top:987px" width="24" height="24" viewBox="0 0 24 24"><rect x="0" y="0" width="24" height="24" rx="2" fill="#3a92f0"/><rect x="4" y="4" width="16" height="16" fill="#f2f6fb"/>
<path d="M12 6 L15 11 H13 V17 H11 V11 H9Z" fill="#3a92f0"/><path d="M8 12 H16" stroke="#3a92f0" stroke-width="1.5"/></svg>
<svg class="abs" style="left:300px;top:987px" width="24" height="24" viewBox="0 0 24 24"><g transform="scale(0.5)"><path d="M0.5 9 Q0.5 7.5 2 7.5 L20.5 7.5 Q22.5 7.5 22 9.5 L18.5 18.5 L17.4 14 L9 14 L16 30.5 L19.8 42 L13 42 Z" fill="#f52d06"/>
<path d="M27 7.5 L35.5 7.5 L19.8 42 L13 42 L13.5 40 Z" fill="#e2561e"/>
<path d="M33 7.5 L46.5 7.5 Q48 7.5 47.5 9.5 L33.5 42 L27 42 L25.5 33.5 L30.3 27.5 L30.8 30.5 L38.5 14 L31 14 Z" fill="#f52d06"/>
<path d="M25.5 33.5 L30.3 27.5 L30.8 30.5 L33.5 42 L27 42 Z" fill="#e84a18"/></g></svg>
<svg class="abs" style="left:349px;top:987px" width="24" height="24" viewBox="0 0 24 24"><path d="M1 4 H9 L11 6 H23 V20 H1Z" fill="#e0b070"/><rect x="1" y="3" width="8" height="2" fill="#f0a020"/>
<rect x="1" y="9" width="22" height="11" fill="#f5c048"/><rect x="5" y="11" width="14" height="3.5" fill="#2a90e8"/><rect x="5" y="14.5" width="3" height="5.5" fill="#2a90e8"/><rect x="16" y="14.5" width="3" height="5.5" fill="#2a90e8"/></svg>
<svg class="abs" style="left:399px;top:987px" width="24" height="24" viewBox="0 0 24 24"><ellipse cx="9" cy="9.5" rx="8.5" ry="7.5" fill="#3ccd68"/><path d="M4 15 L3.5 19 L8 16.5Z" fill="#3ccd68"/>
<circle cx="6.5" cy="7.5" r="1" fill="#2a8a48"/><circle cx="11.5" cy="7.5" r="1" fill="#2a8a48"/>
<ellipse cx="16.5" cy="15.5" rx="7" ry="6" fill="#eef0ee"/><path d="M19 20 L22 23 L21.5 19Z" fill="#eef0ee"/>
<circle cx="14" cy="14" r="0.9" fill="#888"/><circle cx="19" cy="14" r="0.9" fill="#888"/></svg>
<svg class="abs" style="left:448px;top:987px" width="24" height="24" viewBox="0 0 24 24"><g transform="translate(12 12)" fill="#fff"><path d="M-1.8 -9 H1.8 L2.3 -6.3 L4.6 -5 L7.1 -6 L8.9 -2.9 L6.8 -1.1 V1.1 L8.9 2.9 L7.1 6 L4.6 5 L2.3 6.3 L1.8 9 H-1.8 L-2.3 6.3 L-4.6 5 L-7.1 6 L-8.9 2.9 L-6.8 1.1 V-1.1 L-8.9 -2.9 L-7.1 -6 L-4.6 -5 L-2.3 -6.3Z"/></g>
<circle cx="12" cy="12" r="3.6" fill="#1cc3d1"/></svg>
<svg class="abs" style="left:497px;top:987px" width="24" height="24" viewBox="0 0 24 24"><use href="#xzlogo" xlink:href="#xzlogo"/></svg>
<svg class="abs" style="left:545px;top:987px" width="24" height="24" viewBox="0 0 24 24"><path d="M2.5 1.5 H17 L22 6.5 V22.5 H2.5Z" fill="#fff" stroke="#2a5aa0" stroke-width="0.8"/><path d="M17 1.5 V6.5 H22" fill="#ddd" stroke="#2a5aa0" stroke-width="0.6"/>
<rect x="4" y="3" width="15" height="18" fill="#2a9a40"/><path d="M4 3 H11 L9 14 L4 12Z" fill="#1a2a40"/><path d="M10 3 H15 L13 12 L10 10Z" fill="#3ab0e8"/><path d="M15 6 H19 V21 H16Z" fill="#f04020"/><rect x="15" y="10" width="4" height="4" fill="#f0c020"/></svg>
<svg class="abs" style="left:595px;top:987px" width="24" height="24" viewBox="0 0 24 24"><rect x="1" y="3" width="22" height="14" fill="#fff" stroke="#777" stroke-width="1.2"/><path d="M9 8 V10 M15 8 V10 M9 12 Q12 14.5 15 12" stroke="#999" stroke-width="0.9" fill="none"/>
<rect x="11" y="17.5" width="2" height="2.5" fill="#777"/><rect x="7" y="20" width="10" height="1.5" fill="#777"/></svg>
<svg class="abs" style="left:1686px;top:994px" width="14" height="9" viewBox="0 0 14 9"><path d="M1 8 L7 2 L13 8" fill="none" stroke="#fff" stroke-width="1.2"/></svg>
<svg class="abs" style="left:1708px;top:992px" width="18" height="16" viewBox="0 0 18 16"><path d="M4.5 2.5 H16.5 V11.5 H4.5" fill="none" stroke="#fff" stroke-width="1.1"/><path d="M1.5 1.5 H5.5 V4.5 H1.5Z M3.5 4.5 V14.5 M10.5 11.5 V14.5 M6 14.5 H15" fill="none" stroke="#fff" stroke-width="1.1"/><path d="M2.5 2.8 L3.5 3.8 L4.8 2.2" stroke="#fff" stroke-width="0.7" fill="none"/></svg>
<svg class="abs" style="left:1733px;top:991px" width="15" height="16" viewBox="0 0 15 16"><path d="M7.5 0.5 V15.5 M2 4.5 H13 V10.5 H2Z" fill="none" stroke="#555" stroke-width="2.6"/><path d="M7.5 0.5 V15.5 M2 4.5 H13 V10.5 H2Z" fill="none" stroke="#fff" stroke-width="1.1"/></svg>
<svg class="abs" style="left:1759px;top:989px" width="20" height="20" viewBox="0 0 20 20"><g transform="rotate(-15 10 10)"><rect x="2" y="2" width="16" height="16" rx="2.5" fill="#e8501a"/>
<path d="M14.5 5.8 C12 4.6 7 4.8 5.8 7.2 C4.8 9.5 8 10.2 10.5 10.5 C13 10.8 13.5 11.8 12 12.8 C10.5 13.6 7.5 13.3 5.2 12.6 L5.4 14.8 C8 15.6 12.2 15.6 14.2 13.8 C15.8 12.2 15 10 11.8 9.3 C9.5 8.8 7.8 8.6 8.2 7.6 C8.8 6.6 12 6.8 14.2 7.6Z" fill="#fff"/></g></svg>
<div class="abs" style="left:1780px;top:982px;width:88px;text-align:center;font-size:12px;line-height:16px;color:#fff">10:37</div>
<div class="abs" style="left:1780px;top:1000px;width:88px;text-align:center;font-size:12px;line-height:16px;color:#fff;letter-spacing:0.4px">2023/3/31</div>
<svg class="abs" style="left:1870px;top:990px" width="28" height="26" viewBox="0 0 28 26"><path d="M2 1.5 H18 V13 H9 L5 17 V13 H2Z" fill="#fff"/><path d="M5 5 H15 M5 8 H15 M5 11 H12" stroke="#1eb0c8" stroke-width="1"/>
<circle cx="18" cy="16.5" r="7.5" fill="#2d6a4e" stroke="#4a7a6a" stroke-width="0.6"/><text x="18" y="20.5" font-family="Liberation Sans,sans-serif" font-weight="bold" font-size="11" fill="#fff" text-anchor="middle">2</text></svg>
<div class="abs" style="left:1752px;top:187px;width:160px;height:27px;background:#fff;border-top:1px solid #d8ecf8;border-bottom:1px solid #d8ecf8"></div>
<svg class="abs" style="left:1731px;top:182px" width="34" height="34" viewBox="0 0 20 20"><g transform="rotate(-15 10 10)"><rect x="2" y="2" width="16" height="16" rx="2.5" fill="#e8501a"/>
<path d="M14.5 5.8 C12 4.6 7 4.8 5.8 7.2 C4.8 9.5 8 10.2 10.5 10.5 C13 10.8 13.5 11.8 12 12.8 C10.5 13.6 7.5 13.3 5.2 12.6 L5.4 14.8 C8 15.6 12.2 15.6 14.2 13.8 C15.8 12.2 15 10 11.8 9.3 C9.5 8.8 7.8 8.6 8.2 7.6 C8.8 6.6 12 6.8 14.2 7.6Z" fill="#fff"/></g></svg>
<svg class="abs" style="left:1770px;top:191px" width="135" height="20" viewBox="0 0 135 20" fill="none" stroke="#1a6ee0" stroke-width="1.8">
<path d="M9 2 V17 M3 6 H15 V12 H3Z"/>
<circle cx="30" cy="8" r="1.6" stroke-width="1.2"/><path d="M36 10 Q38 11 36 15" stroke-width="2.2"/>
<rect x="54" y="2" width="6" height="10" rx="3" fill="#1a6ee0" stroke="none"/><path d="M51.5 9 Q51.5 14.5 57 14.5 Q62.5 14.5 62.5 9 M57 14.5 V17 M54.5 17.5 H59.5"/>
<rect x="75" y="5" width="14" height="10" rx="1.5" stroke-width="1.5"/><path d="M77.5 8 H86.5 M77.5 10.5 H86.5 M79 13 H85" stroke-width="1.2" stroke-dasharray="1.2 0.8"/>
<path d="M99 5 L103 3 Q105 5 107 3 L111 5 L113 9 L110 10 V17 H100 V10 L97 9Z" fill="#1a6ee0" stroke="none"/>
<rect x="123" y="3" width="6" height="6" rx="1.2" fill="#1a6ee0" stroke="none"/><rect x="123" y="11" width="6" height="6" rx="1.2" fill="#1a6ee0" stroke="none"/><rect x="131" y="3" width="6" height="6" rx="1.2" fill="#1a6ee0" stroke="none"/><rect x="131" y="11" width="6" height="6" rx="1.2" fill="#1a6ee0" stroke="none"/>
</svg>
<!-- dialog -->
<div class="abs" id="dlg" style="left:619px;top:273px;width:600px;height:410px;border-radius:6px;background:#2e2e36;overflow:hidden;color:#fff">
  <div class="abs" style="left:0;top:0;width:120px;height:410px;background:#25252a"></div>
  <!-- logo -->
  <svg class="abs" style="left:34px;top:30px" width="48" height="48" viewBox="0 0 48 48"><use href="#xzlogo" xlink:href="#xzlogo"/></svg>
  <div class="abs" style="left:0;top:87px;width:120px;text-align:center;font-size:13px;line-height:18px;color:#eee">小智护眼宝</div>
  <div class="abs" style="left:0;top:109px;width:120px;text-align:center;font-size:12px;line-height:16px;color:#9a9a9e">V2.0.26.38</div>
  <!-- nav -->
  <div class="abs" style="left:0;top:186px;width:120px;height:36px;background:#2e2e35"></div>
  <div class="abs nav" style="top:158px">护眼模式</div>
  <div class="abs nav" style="top:194px;color:#fff">任务栏透明</div>
  <div class="abs nav" style="top:230px">定时任务</div>
  <div class="abs nav" style="top:266px">会员中心</div>
  <div class="abs nav" style="top:302px">选项设置</div>
  <svg class="abs" style="left:15px;top:159px" width="18" height="18" viewBox="0 0 18 18" fill="none" stroke="#c8c8c8" stroke-width="1.3">
    <path d="M1 9 C4 0.5 14 0.5 17 9 C14 17.5 4 17.5 1 9Z"/><circle cx="9" cy="9" r="2.6"/>
  </svg>
  <svg class="abs" style="left:15px;top:195px" width="18" height="18" viewBox="0 0 18 18" fill="none" stroke="#fff" stroke-width="1.6" stroke-linecap="round">
    <path d="M9 1.5V5.5M9 12.5V16.5M1.5 9H5.5M12.5 9H16.5M3.7 3.7L6.3 6.3M11.7 11.7L14.3 14.3M14.3 3.7L11.7 6.3M6.3 11.7L3.7 14.3"/>
  </svg>
  <svg class="abs" style="left:15px;top:231px" width="18" height="18" viewBox="0 0 18 18" fill="none" stroke="#c8c8c8" stroke-width="1.3">
    <circle cx="9" cy="9" r="7.3"/><path d="M9 4.5V9.5H12.5"/>
  </svg>
  <svg class="abs" style="left:15px;top:267px" width="18" height="18" viewBox="0 0 18 18" fill="none" stroke="#c8c8c8" stroke-width="1.3">
    <path d="M5 3H13L17 8.5L9 16L1 8.5Z"/><path d="M5.5 8L9 11.5L12.5 8"/>
  </svg>
  <svg class="abs" style="left:15px;top:303px" width="18" height="18" viewBox="0 0 18 18" fill="none" stroke="#c8c8c8" stroke-width="1.3">
    <path d="M5 1.8H13L17 9L13 16.2H5L1 9Z"/><circle cx="9" cy="9" r="2.6"/>
  </svg>
  <!-- title bar -->
  <svg class="abs" style="left:446px;top:7px" width="20" height="20" viewBox="0 0 20 20">
    <circle cx="10" cy="10" r="10" fill="#777670"/>
    <circle cx="10" cy="7.5" r="3.6" fill="none" stroke="#e8e8e8" stroke-width="1.2"/>
    <path d="M4.3 16 Q6 11.5 10 11.3 Q14 11.5 15.7 16" fill="none" stroke="#e8e8e8" stroke-width="1.2"/>
  </svg>
  <div class="abs" style="left:476px;top:8px;font-size:13px;line-height:18px;color:#fff">登录</div>
  <svg class="abs" style="left:518px;top:11px" width="14" height="14" viewBox="0 0 14 14" stroke="#eee" stroke-width="1.2">
    <path d="M0.5 1.5H12.5M0.5 6.5H12.5M0.5 11.5H12.5"/>
  </svg>
  <svg class="abs" style="left:545px;top:11px" width="14" height="14" viewBox="0 0 14 14" stroke="#eee" stroke-width="1.2">
    <path d="M0 6.5H12"/>
  </svg>
  <svg class="abs" style="left:572px;top:12px" width="14" height="14" viewBox="0 0 14 14" stroke="#eee" stroke-width="1.2">
    <path d="M0.5 0.5L11.5 11.5M11.5 0.5L0.5 11.5"/>
  </svg>
  <!-- card 1 -->
  <div class="abs card" style="top:51px;height:114px"></div>
  <div class="abs ctitle" style="top:65px">任务栏颜色</div>
  <div class="abs sw" style="left:165px;background:#f92d05"></div>
  <div class="abs sw" style="left:235px;background:#fcd200"></div>
  <div class="abs sw" style="left:305px;background:#00f200"></div>
  <div class="abs sw" style="left:375px;background:#0098fb"></div>
  <div class="abs sw" style="left:445px;background:#fb00a2"></div>
  <div class="abs sw" style="left:515px;background:conic-gradient(from 0deg at 50% 50%,#f92d05 0deg 31deg,#e8501a 31deg 42deg,#f0a012 42deg 60deg,#fcd200 60deg 112deg,#63c24a 112deg 140deg,#2aa84a 140deg 160deg,#08b010 160deg 178deg,#1ec6c8 178deg 196deg,#00b4f5 196deg 224deg,#2a7ce8 224deg 257deg,#1a44c0 257deg 288deg,#e05fb0 288deg 302deg,#f90aa0 302deg 340deg,#f51a50 340deg 354deg,#f92d05 354deg 360deg)"></div>
  <svg class="abs" style="left:545px;top:129px" width="16" height="16" viewBox="0 0 16 16">
    <circle cx="8" cy="8" r="7.6" fill="#2aa052"/>
    <path d="M4.3 8.2L7 10.6L11.7 5.6" fill="none" stroke="#fff" stroke-width="1.5"/>
  </svg>
  <svg class="abs" style="left:525px;top:117px" width="14" height="20" viewBox="0 0 14 20">
    <path d="M1 1V15.5L4.5 12.3L7.2 18.3L9.6 17.2L7 11.4H11.8Z" fill="#fff" stroke="#000" stroke-width="1"/>
  </svg>
  <!-- card 2 -->
  <div class="abs card" style="top:190px;height:80px"></div>
  <div class="abs ctitle" style="top:205px">任务栏透明度</div>
  <div class="abs" style="left:165px;top:238px;width:390px;height:10px;border-radius:5px;overflow:hidden;background:#25252b">
    <div class="abs" style="left:0;top:0;width:17px;height:10px;background:#5f5a5a"></div>
    <div class="abs" style="left:17px;top:0;width:50px;height:10px;background:#6b6166"></div>
    <div class="abs" style="left:67px;top:0;width:32px;height:10px;background:#6e6f6a"></div>
    <div class="abs" style="left:99px;top:0;width:46px;height:10px;background:#7a7377"></div>
    <div class="abs" style="left:145px;top:0;width:41px;height:10px;background:#778890"></div>
    <div class="abs" style="left:186px;top:0;width:50px;height:10px;background:#8f9c98"></div>
    <div class="abs" style="left:236px;top:0;width:25px;height:10px;background:#9aaea8"></div>
    <div class="abs" style="left:261px;top:0;width:40px;height:10px;background:#adaea5"></div>
  </div>
  <div class="abs" style="left:457px;top:235px;width:40px;height:16px;border-radius:8px;background:#fff"></div>
  <!-- card 3 -->
  <div class="abs card" style="top:291px;height:91px"></div>
  <div class="abs ctitle" style="top:305px">任务栏样式</div>
  <div class="abs radio" style="left:167px"></div><div class="abs rlab" style="left:191px">禁用</div>
  <div class="abs radio" style="left:267px;border-color:#27a44a"><div class="abs" style="left:6px;top:6px;width:6px;height:6px;border-radius:50%;background:#27a44a"></div></div><div class="abs rlab" style="left:291px">透明</div>
  <div class="abs radio" style="left:367px"></div><div class="abs rlab" style="left:391px">模糊</div>
  <div class="abs radio" style="left:467px"></div><div class="abs rlab" style="left:491px">亚克力</div>
</div>
</body></html>
